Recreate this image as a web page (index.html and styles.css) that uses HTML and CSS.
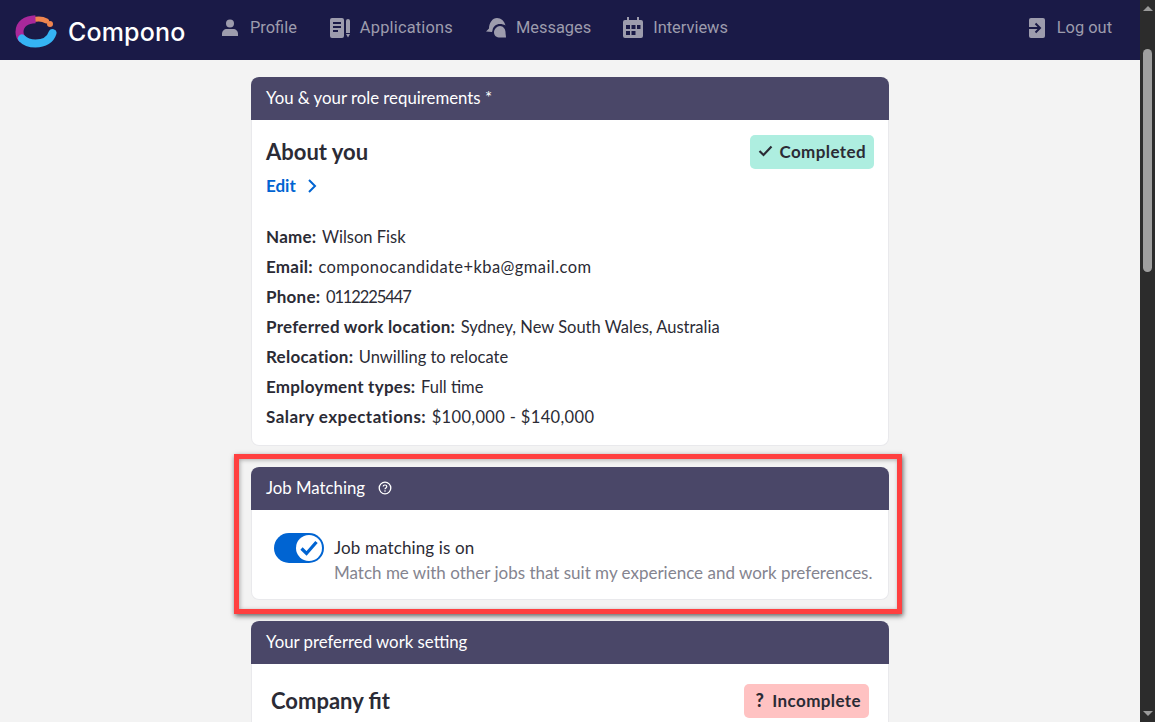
FILE: index.html
```html
<!DOCTYPE html>
<html lang="en">
<head>
<meta charset="utf-8">
<title>Compono</title>
<link rel="stylesheet" href="styles.css">
</head>
<body>
<div class="viewport">
  <div class="page">
    <nav class="nav">
      <a class="brand">
        <svg class="logo" width="44" height="36" viewBox="0 0 44 36">
          <path d="M22.500 6.300C26 5.600 30 6 33.500 8" fill="none" stroke="#f0854f" stroke-width="5" stroke-linecap="round"/>
          <circle cx="37" cy="11" r="3" fill="#f0854f"/>
          <path d="M22.500 6.200C13 6.600 6.500 11 6.500 19c0 3 1 5.500 3 7.300" fill="none" stroke="#a9289a" stroke-width="8"/>
          <path d="M9 25.500c3.500 3.800 8.500 5 13.500 5 9 0 15-4 17-10.500" fill="none" stroke="#35b4f4" stroke-width="8" stroke-linecap="round"/>
        </svg>
        <span class="brand-name">Compono</span>
      </a>
      <a class="nav-item nav-profile">
        <svg class="nav-icon" width="16" height="18" viewBox="0 0 16 18"><circle cx="8" cy="4.500" r="4"/><path d="M0 17v-2c0-3 2-5 5-5h6c3 0 5 2 5 5v2z"/></svg>
        <span>Profile</span>
      </a>
      <a class="nav-item nav-apps">
        <svg class="nav-icon" width="21" height="20" viewBox="0 0 21 20"><path fill-rule="evenodd" d="M2 0h10a2 2 0 0 1 2 2v16a2 2 0 0 1-2 2H2a2 2 0 0 1-2-2V2a2 2 0 0 1 2-2zm1 4v2h8V4zm0 4v2h8V8zm0 4v2h5v-2z"/><path d="M16 3a2 2 0 0 1 4 0v12h-4z"/><path d="M16 16h4l-2 3.500z"/></svg>
        <span>Applications</span>
      </a>
      <a class="nav-item nav-messages">
        <svg class="nav-icon" width="20" height="20" viewBox="0 0 20 20"><path d="M0 13.500L3 10.500C3 5 6.500 0 11 0c4 0 7.500 3 8.500 7.500-1.500-1-3.500-1.500-5.500-1.500-4 0-7 2.500-7.500 6.500L6 14z"/><path d="M8 14.500C8 11 11 8 14 8c3 0 5.500 3 5.500 6 0 2 .5 4 .5 5.500H14c-3.500 0-6-2-6-5z"/></svg>
        <span>Messages</span>
      </a>
      <a class="nav-item nav-interviews">
        <svg class="nav-icon" width="20" height="21" viewBox="0 0 20 21"><path fill-rule="evenodd" d="M4 0h2v3h8V0h2v3h2a2 2 0 0 1 2 2v14a2 2 0 0 1-2 2H2a2 2 0 0 1-2-2V5a2 2 0 0 1 2-2h2zM3 8v4h4V8zm5.500 0v4h4V8zM14 8v4h3.500V8zM3 14v4h4v-4zm5.500 0v4h4v-4z"/></svg>
        <span>Interviews</span>
      </a>
      <a class="nav-item nav-logout">
        <svg class="nav-icon" width="16" height="20" viewBox="0 0 16 20"><rect width="16" height="20" rx="2"/><path d="M0 10h11M6.500 5.500L11 10l-4.500 4.500" fill="none" stroke="#1a1a47" stroke-width="2"/></svg>
        <span>Log out</span>
      </a>
    </nav>
    <main class="content">
      <section class="card">
        <header class="card-head">You &amp; your role requirements *</header>
        <div class="card-body about">
          <div class="title-row">
            <div>
              <h2 class="card-title">About you</h2>
              <a class="edit">Edit
                <svg width="10" height="14" viewBox="0 0 10 14"><path d="M2 1l6 6-6 6" fill="none" stroke="#0064d2" stroke-width="2"/></svg>
              </a>
            </div>
            <span class="badge badge-ok">
              <svg width="15" height="12" viewBox="0 0 15 12"><path d="M1.500 6l4 4 8-8.500" fill="none" stroke="#2b2b35" stroke-width="2.200"/></svg>
              Completed
            </span>
          </div>
          <dl class="facts">
            <div class="fact"><dt>Name:</dt><dd>Wilson Fisk</dd></div>
            <div class="fact fact-email"><dt>Email:</dt><dd>componocandidate+kba@gmail.com</dd></div>
            <div class="fact fact-phone"><dt>Phone:</dt><dd>0112225447</dd></div>
            <div class="fact"><dt>Preferred work location:</dt><dd>Sydney, New South Wales, Australia</dd></div>
            <div class="fact"><dt>Relocation:</dt><dd>Unwilling to relocate</dd></div>
            <div class="fact"><dt>Employment types:</dt><dd>Full time</dd></div>
            <div class="fact fact-salary"><dt>Salary expectations:</dt><dd>$100,000 - $140,000</dd></div>
          </dl>
        </div>
      </section>
      <section class="card highlighted">
        <header class="card-head">Job Matching
          <svg class="help" width="14" height="14" viewBox="0 0 14 14"><circle cx="7" cy="7" r="5.800" fill="none" stroke="#fff" stroke-width="1.300"/><path d="M5.200 5.500C5.200 4.500 6 4 7 4s1.800.6 1.800 1.500C8.800 7 7 7 7 8.300" fill="none" stroke="#fff" stroke-width="1.200"/><circle cx="7" cy="10" r=".8" fill="#fff"/></svg>
        </header>
        <div class="card-body matching">
          <span class="toggle">
            <span class="knob">
              <svg width="20" height="18" viewBox="0 0 20 18"><path d="M2.500 9.500l5 5L17.500 3" fill="none" stroke="#0064d2" stroke-width="3.200"/></svg>
            </span>
          </span>
          <div>
            <div class="match-title">Job matching is on</div>
            <div class="match-sub">Match me with other jobs that suit my experience and work preferences.</div>
          </div>
        </div>
        <div class="highlight-frame"></div>
      </section>
      <section class="card">
        <header class="card-head">Your preferred work setting</header>
        <div class="card-body company">
          <h2 class="card-title">Company fit</h2>
          <span class="badge badge-bad"><b class="q">?</b> Incomplete</span>
        </div>
      </section>
    </main>
  </div>
  <div class="scrollbar">
    <span class="arrow arrow-up"></span>
    <span class="thumb"></span>
    <span class="arrow arrow-down"></span>
  </div>
</div>
</body>
</html>
```
FILE: styles.css
```css
* { box-sizing: border-box; }
html, body { margin: 0; height: 100%; overflow: hidden; }
body { font-family: "Lato", "Liberation Sans", sans-serif; color: #2b2b35; background: #f3f3f3; }
.viewport { display: flex; height: 722px; width: 1155px; }
.page { width: 1140px; height: 722px; overflow: hidden; flex: none; }
.nav { height: 60px; background: #1a1a47; display: flex; align-items: center; padding-left: 15px; }
.brand { display: flex; align-items: center; width: 207px; flex: none; }
.logo { margin: 2px 11px 0 -2px; flex: none; }
.brand-name { color: #fff; font-family: "Inter", sans-serif; font-size: 25px; font-weight: 500; letter-spacing: .15px; margin-top: 4px; }
.nav-item { display: flex; align-items: center; color: #9d9cad; font-family: "Roboto", sans-serif; font-size: 16.400px; margin-top: -5px; }
.nav-icon { fill: #9d9cad; flex: none; }
.nav-profile { gap: 12px; margin-right: 33px; }
.nav-apps { gap: 9px; margin-right: 33px; letter-spacing: .2px; }
.nav-messages { gap: 10px; margin-right: 32px; }
.nav-interviews { gap: 10px; }
.nav-logout { gap: 12px; margin-left: auto; margin-right: 28px; }
.content { display: flex; flex-direction: column; gap: 21px; width: 638px; margin: 17px auto 0; }
.card { background: #fff; border-radius: 8px; border: 1px solid #e9e9ec; border-top: 0; position: relative; flex: none; }
.card-head { height: 43px; margin: 0 -1px; background: #4a4768; color: #fff; border-radius: 8px 8px 0 0; padding: 0 15px 2px; display: flex; align-items: center; font-size: 16.800px; }
.help { margin-left: 13px; }
.card-body { padding: 15px 14px 0; }
.about { height: 325px; }
.title-row { display: flex; justify-content: space-between; align-items: flex-start; }
.card-title { margin: 3px 0 0; font-size: 22px; line-height: 27px; font-weight: 700; color: #2b2b35; }
.edit { display: flex; align-items: center; gap: 11px; color: #0064d2; font-weight: 700; font-size: 17px; margin-top: 10px; line-height: 22px; }
.badge { display: inline-flex; align-items: center; gap: 6px; height: 34px; border-radius: 5px; font-size: 17px; font-weight: 700; letter-spacing: .4px; padding: 0 8px 2px; }
.badge-ok { background: #aeeee0; }
.badge-bad { background: #ffc2c2; }
.q { font-size: 18px; margin: 0 2px 0 3px; }
.facts { margin: 25px 0 0; }
.fact { display: flex; gap: 5.500px; height: 30px; align-items: baseline; line-height: 30px; font-size: 16.500px; }
dt { font-size: 17px; font-weight: 700; letter-spacing: .25px; }
dd { margin: 0; }
.fact-email dd { letter-spacing: .43px; }
.fact-phone dd { letter-spacing: -1.100px; }
.fact-salary dt { letter-spacing: .45px; }
.fact-salary dd { letter-spacing: .35px; }
.matching { display: flex; height: 89px; padding: 23px 0 0 22px; gap: 10px; }
.toggle { width: 50px; height: 30px; border-radius: 15px; background: #0064d2; display: flex; align-items: center; justify-content: flex-end; padding-right: 2px; flex: none; }
.knob { width: 26px; height: 26px; border-radius: 50%; background: #fff; display: flex; align-items: center; justify-content: center; }
.match-title { font-size: 17px; line-height: 25px; margin-top: 2px; letter-spacing: .13px; white-space: nowrap; }
.match-sub { font-size: 17px; line-height: 25px; color: #84848f; white-space: nowrap; }
.highlight-frame { position: absolute; left: -18px; top: -13px; right: -14px; bottom: -15px; border: 5px solid #ff4040; box-shadow: 1px 2px 5px rgba(0,0,0,.6), inset 1px 1px 4px rgba(0,0,0,.3); }
.company { display: flex; justify-content: space-between; padding: 20px 19px 0 19px; height: 100px; align-items: flex-start; }
.scrollbar { width: 15px; height: 722px; background: #2c2c2c; position: relative; flex: none; display: flex; flex-direction: column; align-items: center; }
.arrow { width: 0; height: 0; border-left: 5px solid transparent; border-right: 5px solid transparent; flex: none; }
.arrow-up { border-bottom: 5px solid #9a9a9a; margin-top: 6px; }
.arrow-down { border-top: 5px solid #9a9a9a; margin-top: auto; margin-bottom: 6px; }
.thumb { width: 9px; height: 223px; border-radius: 5px; background: #9f9f9f; margin-top: 38px; }
```
